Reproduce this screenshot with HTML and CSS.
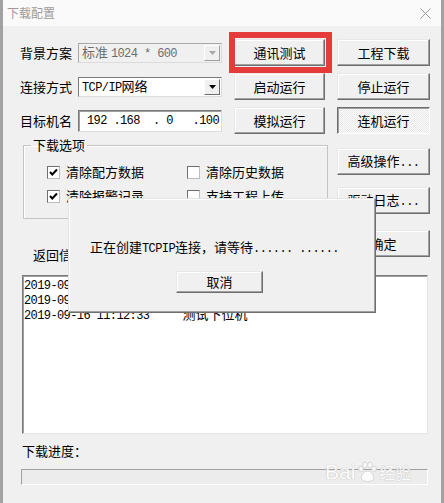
FILE: index.html
```html
<!DOCTYPE html>
<html lang="zh-CN">

<head>
  <meta charset="UTF-8">
  <meta name="viewport" content="width=device-width, initial-scale=1.0">
  <title>下载配置</title>
  <link rel="stylesheet" href="styles.css">
</head>

<body>
  <div class="window">
    <div class="titlebar">
      <span class="title">下载配置</span>
      <svg class="close" width="11" height="11" viewBox="0 0 11 11">
        <path d="M0.5 0.5 L10.5 10.5 M10.5 0.5 L0.5 10.5" stroke="#9a9a9a" stroke-width="1" fill="none" />
      </svg>
    </div>

    <!-- 上部: 参数 + 操作按钮 -->
    <div class="top">
      <div class="fields">
        <span class="label">背景方案</span>
        <div class="combo disabled">
          <span class="value">标准 <span class="en">1024 * 600</span></span>
          <span class="arrow"><svg width="7" height="4" viewBox="0 0 7 4"><path d="M0 0 H7 L3.5 4 Z" fill="#a8a8a8" /></svg></span>
        </div>

        <span class="label">连接方式</span>
        <div class="combo">
          <span class="value"><span class="en">TCP/IP</span>网络</span>
          <span class="arrow"><svg width="7" height="4" viewBox="0 0 7 4"><path d="M0 0 H7 L3.5 4 Z" fill="#000" /></svg></span>
        </div>

        <span class="label">目标机名</span>
        <div class="ipbox en">192 .168  . 0   .100</div>
      </div>

      <div class="actions">
        <button class="btn">通讯测试</button>
        <button class="btn">工程下载</button>
        <button class="btn">启动运行</button>
        <button class="btn">停止运行</button>
        <button class="btn">模拟运行</button>
        <button class="btn pressed">连机运行</button>
      </div>
    </div>

    <!-- 中部: 下载选项 -->
    <div class="middle">
      <div class="left">
        <fieldset class="group">
          <legend>下载选项</legend>
          <div class="checks">
            <label class="check"><span class="box"><svg width="11" height="11" viewBox="0 0 11 11"><path d="M2 5 L4.3 7.5 L9 2.5" stroke="#000" stroke-width="2" fill="none" /></svg></span>清除配方数据</label>
            <label class="check"><span class="box"></span>清除历史数据</label>
            <label class="check"><span class="box"><svg width="11" height="11" viewBox="0 0 11 11"><path d="M2 5 L4.3 7.5 L9 2.5" stroke="#000" stroke-width="2" fill="none" /></svg></span>清除报警记录</label>
            <label class="check"><span class="box"></span>支持工程上传</label>
          </div>
        </fieldset>
        <div class="ret-label">返回信息：</div>
      </div>

      <div class="side">
        <button class="btn">高级操作<span class="en">...</span></button>
        <button class="btn">驱动日志<span class="en">...</span></button>
        <button class="btn ok">确定</button>
      </div>
    </div>

    <div class="log">
      <div class="line">2019-09-16 11:12:31    <span class="cn">开始连接</span></div>
      <div class="line">2019-09-16 11:12:32    <span class="cn">连接成功</span></div>
      <div class="line">2019-09-16 11:12:33     <span class="cn">测试下位机</span></div>
    </div>

    <div class="progress-label">下载进度：</div>
    <div class="progress"></div>

    <!-- 标注框 -->
    <div class="highlight"></div>

    <!-- 等待对话框 -->
    <div class="modal">
      <div class="message">正在创建<span class="en">TCPIP</span>连接，请等待<span class="en">...... ......</span></div>
      <button class="btn cancel">取消</button>
    </div>

    <div class="watermark">
      <span class="wm-en">Bai</span>
      <svg width="22" height="22" viewBox="0 0 22 22">
        <g fill="#ffffff" stroke="#d2d2d2" stroke-width="1">
          <ellipse cx="5" cy="8" rx="2.3" ry="2.8" />
          <ellipse cx="9" cy="4" rx="2.3" ry="2.8" />
          <ellipse cx="14" cy="4" rx="2.3" ry="2.8" />
          <ellipse cx="18" cy="8" rx="2.3" ry="2.8" />
          <path d="M11.5 10 C7 10 4 16 6 19 C8 21 15 21 17 19 C19 16 16 10 11.5 10 Z" />
        </g>
      </svg>
      <span class="wm-cn">经验</span>
    </div>
  </div>
</body>

</html>
```

FILE: styles.css
```css
* {
  margin: 0;
  padding: 0;
  box-sizing: border-box;
}

body {
  background: #a2a2a2;
  font: 13px/16px "Noto Sans CJK SC", sans-serif;
  color: #000;
  overflow: hidden;
}

.window {
  position: relative;
  width: 438px;
  height: 503px;
  margin-left: 3px;
  background: #f0f0f0;
  overflow: hidden;
}

.titlebar {
  height: 26px;
  background: #fafafa;
  display: flex;
  align-items: center;
  justify-content: space-between;
  padding: 0 10px 0 4px;
}

.title {
  font-size: 12px;
  color: #9a9a9a;
}

.en {
  font: 12px/15px "Liberation Mono", monospace;
  letter-spacing: -0.6px;
}

/* 上部 */
.top {
  display: flex;
  margin: 13px 0 0 17px;
}

.fields {
  display: grid;
  grid-template-columns: 58px 144px;
  grid-auto-rows: 27px;
  row-gap: 7px;
  align-items: center;
}

.combo {
  display: flex;
  align-items: center;
  height: 20px;
  padding: 1px;
  background: #fff;
  border: 1px solid;
  border-color: #7a7a7a #dcdcdc #dcdcdc #7a7a7a;
}

.combo .value {
  flex: 1;
  padding-left: 2px;
  white-space: pre;
}

.combo.disabled {
  background: #f0f0f0;
  color: #6d6d6d;
  border-color: #a8a8a8 #dcdcdc #dcdcdc #a8a8a8;
}

.arrow {
  width: 16px;
  height: 100%;
  display: flex;
  align-items: center;
  justify-content: center;
  background: #f0f0f0;
  border: 1px solid;
  border-color: #fff #6e6e6e #6e6e6e #fff;
}

.combo.disabled .arrow {
  border-color: #fff #a0a0a0 #a0a0a0 #fff;
}

.ipbox {
  height: 22px;
  padding-left: 8px;
  background: #fff;
  border: 1px solid;
  border-color: #7a7a7a #dcdcdc #dcdcdc #7a7a7a;
  box-shadow: inset 1px 1px 0 #a0a0a0;
  line-height: 20px;
  white-space: pre;
}

.actions {
  display: grid;
  grid-template-columns: 91px 93px;
  grid-auto-rows: 27px;
  gap: 7px 12px;
  margin-left: 12px;
}

.btn {
  font: inherit;
  color: #000;
  height: 27px;
  background: #f0f0f0;
  border: 1px solid;
  border-color: #e8e8e8 #6e6e6e #6e6e6e #e8e8e8;
  box-shadow: inset -1px -1px 0 #a0a0a0, inset 1px 1px 0 #fff;
  cursor: pointer;
}

.btn.pressed {
  border-color: #6e6e6e #fff #fff #6e6e6e;
  box-shadow: inset 1px 1px 0 #a0a0a0;
  background: repeating-conic-gradient(#fbfbfb 0 25%, #e9e9e9 0 50%) 0 0 / 2px 2px;
}

/* 中部 */
.middle {
  display: flex;
  gap: 14px;
  margin: 3px 0 0 20px;
}

.left {
  width: 300px;
}

.group {
  border: 1px solid #c4c4c4;
  box-shadow: inset 1px 1px 0 #fff;
  padding: 7px 0 10px 7px;
}

.group legend {
  padding: 0 2px;
  line-height: 16px;
}

.checks {
  display: grid;
  grid-template-columns: 140px 140px;
  grid-auto-rows: 24px;
  margin-left: 16px;
}

.check {
  display: flex;
  align-items: center;
  gap: 6px;
}

.box {
  width: 13px;
  height: 13px;
  background: #fff;
  border: 1px solid;
  border-color: #707070 #bdbdbd #bdbdbd #707070;
  display: flex;
  align-items: center;
  justify-content: center;
}

.ret-label {
  margin: 28px 0 0 10px;
}

.side {
  display: flex;
  flex-direction: column;
  width: 93px;
  padding-top: 11px;
}

.side .btn + .btn {
  margin-top: 12px;
}

.side .btn.ok {
  margin-top: 16px;
}

/* 返回信息 */
.log {
  width: 406px;
  height: 159px;
  margin: 12px 0 0 19px;
  padding-left: 1px;
  background: #fff;
  border: 1px solid;
  border-color: #7a7a7a #e3e3e3 #e3e3e3 #7a7a7a;
  box-shadow: inset 1px 1px 0 #a0a0a0;
  font: 12px/15px "Liberation Mono", monospace;
  letter-spacing: -0.6px;
}

.log .line {
  height: 15px;
  white-space: pre;
}

.log .cn {
  font: 13px/15px "Noto Sans CJK SC", sans-serif;
  letter-spacing: 0;
}

.progress-label {
  margin: 9px 0 0 19px;
}

.progress {
  width: 407px;
  height: 16px;
  margin: 10px 0 0 18px;
  background: #ececec;
  border: 1px solid;
  border-color: #a0a0a0 #fff #fff #a0a0a0;
}

/* 覆盖层 */
.highlight {
  position: absolute;
  left: 226px;
  top: 32px;
  width: 103px;
  height: 41px;
  border: 6px solid #e63b3b;
}

.modal {
  position: absolute;
  left: 65px;
  top: 198px;
  width: 308px;
  height: 115px;
  background: #f0f0f0;
  border: 1px solid;
  border-color: #e3e3e3 #6e6e6e #6e6e6e #e3e3e3;
  box-shadow: inset -1px -1px 0 #a0a0a0, inset 1px 1px 0 #fff;
  padding: 40px 0 0 21px;
}

.message {
  white-space: pre;
}

.modal .btn.cancel {
  display: block;
  width: 87px;
  height: 22px;
  margin: 14px 0 0 86px;
}

.watermark {
  position: absolute;
  left: 322px;
  top: 459px;
  display: flex;
  align-items: center;
  gap: 1px;
  opacity: 0.85;
}

.wm-en {
  font: 21px/26px "Liberation Sans", sans-serif;
  color: #fff;
  text-shadow: 0 0 1px #bdbdbd, 0 0 1px #bdbdbd;
}

.wm-cn {
  font-size: 16px;
  color: #fff;
  text-shadow: 0 0 1px #bdbdbd, 0 0 1px #bdbdbd;
}
```
